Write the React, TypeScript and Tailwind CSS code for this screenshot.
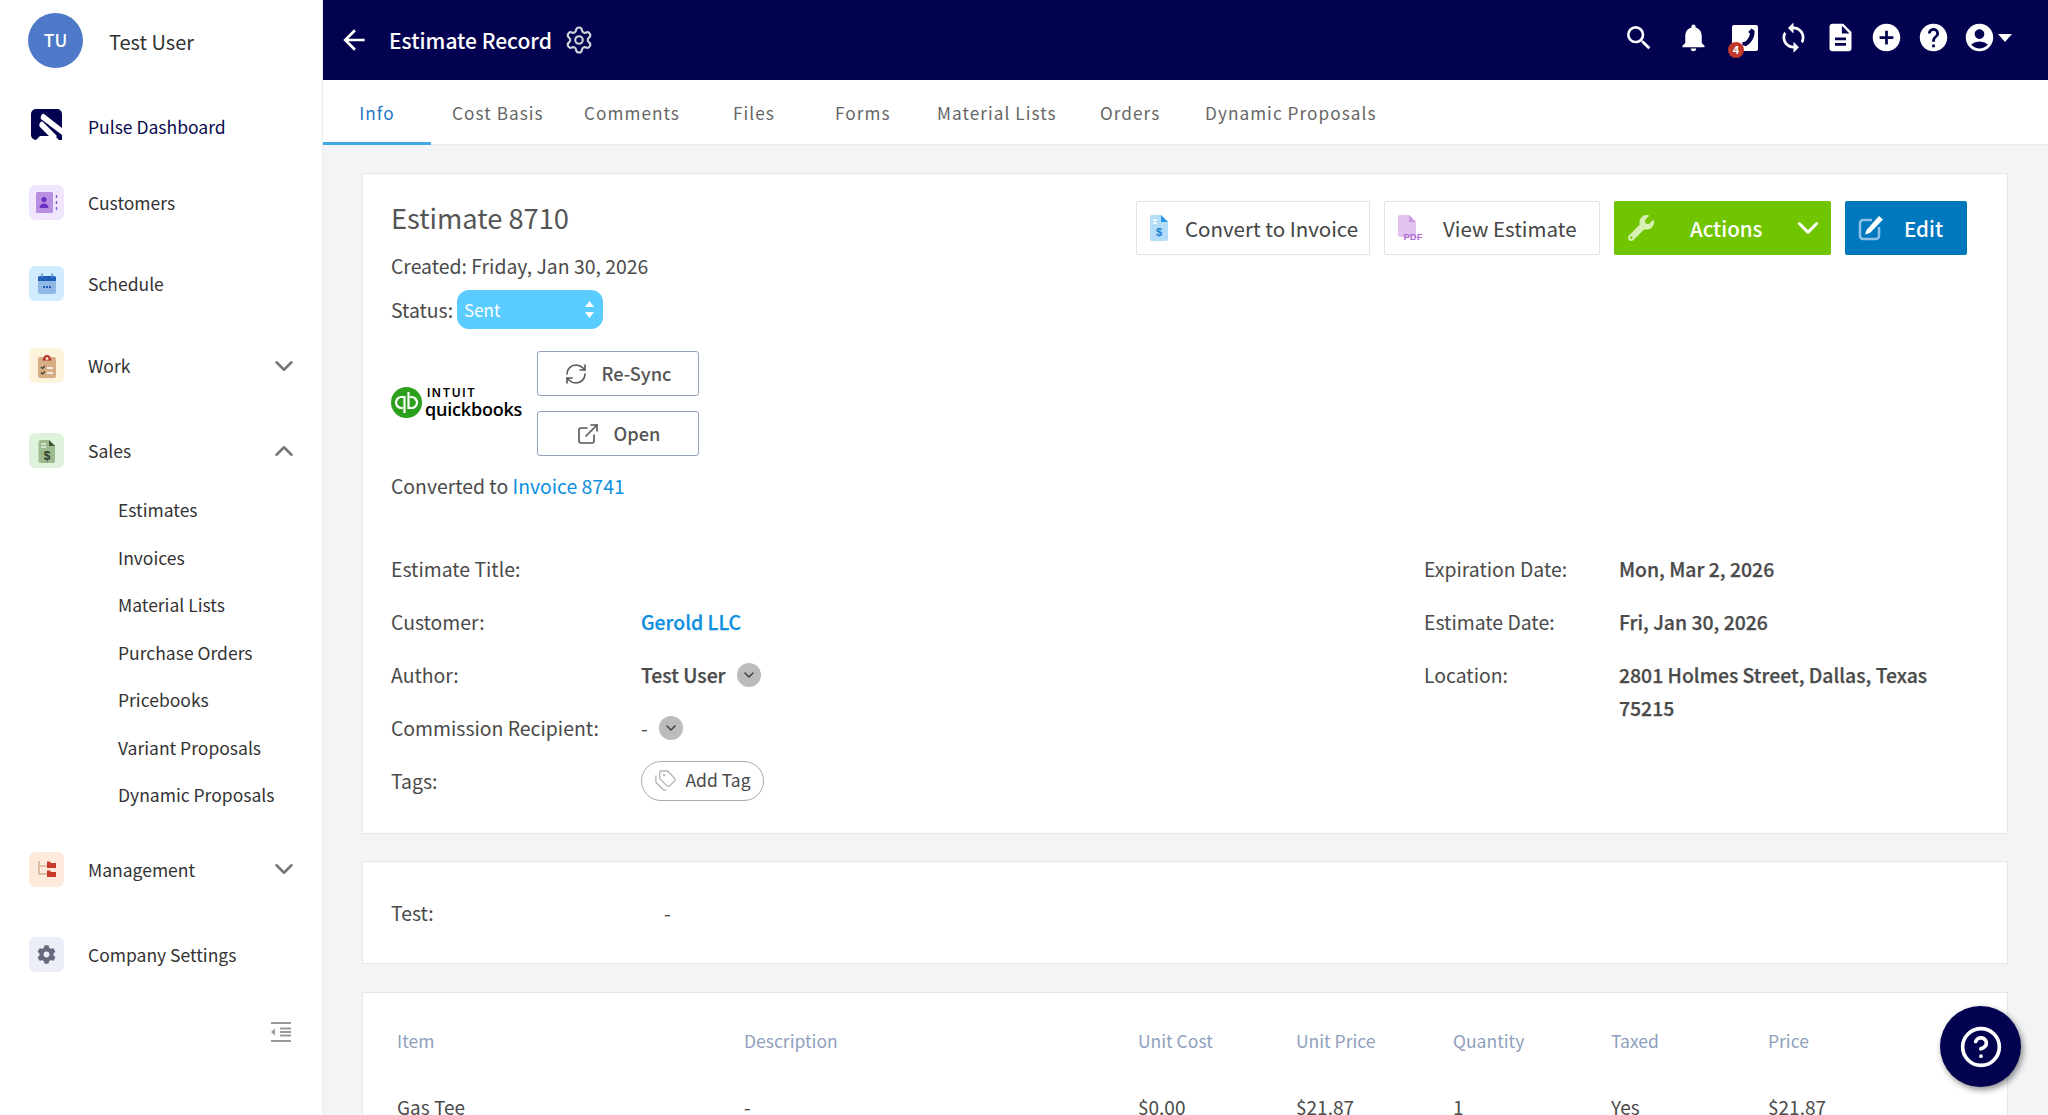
import React from "react";
import { Settings, RefreshCw, ExternalLink, Tags, ChevronDown, ChevronUp, CircleHelp } from "lucide-react";
import { MdSearch, MdNotifications, MdSync, MdDescription, MdAddCircle, MdHelp, MdAccountCircle, MdArrowBack } from "react-icons/md";
import { FaCog, FaWrench } from "react-icons/fa";

function Tile({ bg, children }: { bg: string; children: React.ReactNode }) {
  return <div className={`flex h-[35px] w-[35px] shrink-0 items-center justify-center rounded-[6px] ${bg}`}>{children}</div>;
}

const CustomersIcon = () => (
  <svg width="24" height="22" viewBox="0 0 24 22">
    <rect x="1" y="0" width="17" height="21" rx="1.5" fill="#b78ee2" />
    <circle cx="9" cy="7.5" r="2.6" fill="#6b2fc4" />
    <path d="M4.5 16c0-3 2-4.6 4.5-4.6s4.5 1.6 4.5 4.6z" fill="#6b2fc4" />
    <path d="M21.5 3v3M21.5 9v3M21.5 15v3" stroke="#8a5bd0" strokeWidth="1.4" />
  </svg>
);
const ScheduleIcon = () => (
  <svg width="20" height="22" viewBox="0 0 20 22">
    <rect x="1" y="3" width="18" height="18" rx="2" fill="#8fb8e4" />
    <path d="M1 5a2 2 0 0 1 2-2h14a2 2 0 0 1 2 2v3H1z" fill="#1f5fb8" />
    <path d="M5 0.5v4M15 0.5v4" stroke="#5d8fd0" strokeWidth="1.6" />
    <path d="M6 14h8" stroke="#1f5fb8" strokeWidth="2" strokeDasharray="2 1" />
  </svg>
);
const WorkIcon = () => (
  <svg width="20" height="24" viewBox="0 0 20 24">
    <rect x="1" y="3" width="18" height="21" rx="2" fill="#d6ad84" />
    <path d="M5.5 6.5C6 3 7.5 1 10 1s4 2 4.5 5.5z" fill="#b8352c" />
    <circle cx="10" cy="4.5" r="1.5" fill="#f5dcc0" />
    <path d="M4 13l1.5 1.500L8 12M4 18.500l1.500 1.500L8 17.500" stroke="#333" strokeWidth="1.100" fill="none" />
    <path d="M10 14h6M10 19h6" stroke="#fff" strokeWidth="1.500" />
  </svg>
);
const SalesIcon = () => (
  <svg width="18" height="24" viewBox="0 0 18 24">
    <path d="M2.500 1H11l6 6v15a2 2 0 0 1-2 2H2.500a2 2 0 0 1-2-2V3a2 2 0 0 1 2-2z" fill="#9dbb8f" />
    <path d="M11 1l6 6h-6z" fill="#3d4f38" />
    <path d="M3 5h5M3 8h5" stroke="#e4efdf" strokeWidth="1.500" />
    <text x="9" y="21" textAnchor="middle" fontSize="12" fontWeight="700" fill="#2f3a2b" fontFamily="Liberation Sans">$</text>
  </svg>
);
const ManagementIcon = () => (
  <svg width="20" height="18" viewBox="0 0 20 18">
    <path d="M2 1v13h8M2 6h8" stroke="#d8b494" strokeWidth="1.600" fill="none" />
    <path d="M10 1.500h3l1 1.500h5v5h-9z" fill="#c93a2c" />
    <path d="M10 10.500h3l1 1.500h5v5h-9z" fill="#c93a2c" />
  </svg>
);
const PulseLogo = () => (
  <svg width="31" height="31" viewBox="0 0 31 31" className="ml-[2px]">
    <path d="M5 0h21a5 5 0 0 1 5 5v26h-3L24 27H9l-4 4a5 5 0 0 1-5-5V5a5 5 0 0 1 5-5z" fill="#020250" />
    <path d="M12 13L26 27l-4 4L9 18c-2-2 1-7 3-5zM13 5l18 14v7L10 10c-1-2 1-6 3-5z" fill="#fff" />
  </svg>
);
const CollapseIcon = () => (
  <svg width="20" height="20" viewBox="0 0 20 20">
    <path d="M0 1h20M9 6.500h11M9 10h11M9 13.500h11M0 19h20" stroke="#9a9a9a" strokeWidth="1.800" />
    <path d="M4 6.500v7L0 10z" fill="#9a9a9a" />
  </svg>
);
const PhoneTile = () => (
  <div className="relative h-[26px] w-[26px]">
    <svg width="26" height="26" viewBox="0 0 26 26">
      <rect width="26" height="26" rx="2" fill="#fff" />
      <path d="M19.500 3.500l3 2.200c.6 5.500-2.500 12-8.500 15.500l-3.500-1 -.2-3 3.200-.6c2.500-2.200 4-5 4.500-8l-1.800-1.500z" fill="#020250" />
    </svg>
    <span className="absolute -bottom-[7px] -left-[4px] flex h-[16px] w-[16px] items-center justify-center rounded-full bg-[#c0392b] text-[11px] font-bold leading-none text-white">4</span>
  </div>
);
const QbLogo = () => (
  <div className="flex w-[146px] shrink-0 items-center pb-[3px]">
    <svg width="31" height="31" viewBox="0 0 31 31" className="shrink-0">
      <circle cx="15.500" cy="15.500" r="15.500" fill="#2ca01c" />
      <path d="M13.500 26V10H10.500a5.500 5.500 0 0 0 0 11H12M17.500 5v16h3a5.500 5.500 0 0 0 0-11H19" stroke="#fff" strokeWidth="2.200" fill="none" />
    </svg>
    <div className="ml-[3px] flex flex-col text-black">
      <span className="ml-[2px] font-['Inter',sans-serif] text-[12px] font-semibold leading-[13px] tracking-[1.5px]">INTUIT</span>
      <span className="font-['Open_Sans',sans-serif] text-[18px] font-semibold leading-[20px] tracking-[-0.2px]">quickbooks</span>
    </div>
  </div>
);
const ConvertIcon = () => (
  <svg width="18" height="26" viewBox="0 0 18 26">
    <path d="M2 0h9l7 7v17a2 2 0 0 1-2 2H2a2 2 0 0 1-2-2V2a2 2 0 0 1 2-2z" fill="#b3dcf8" />
    <path d="M11 0l7 7h-7z" fill="#2a9ae6" />
    <path d="M3 5h4M3 8h4" stroke="#fff" strokeWidth="1.400" />
    <text x="9" y="21" textAnchor="middle" fontSize="11" fontWeight="700" fill="#1c7fd0" fontFamily="Liberation Sans">$</text>
  </svg>
);
const PdfIcon = () => (
  <svg width="26" height="26" viewBox="0 0 26 26">
    <path d="M2 0h9l7 7v15H2a2 2 0 0 1-2-2V2a2 2 0 0 1 2-2z" fill="#e2c3ef" />
    <path d="M11 0l7 7h-7z" fill="#c79ae0" />
    <text x="15" y="25" textAnchor="middle" fontSize="9.500" fontWeight="700" fill="#b06ad4" fontFamily="Liberation Sans">PDF</text>
  </svg>
);
const EditIcon = () => (
  <svg width="26" height="26" viewBox="0 0 26 26">
    <path d="M14 5H5a3 3 0 0 0-3 3v13a3 3 0 0 0 3 3h13a3 3 0 0 0 3-3v-9" stroke="#8fc0e6" strokeWidth="2.500" fill="none" />
    <path d="M21 1l4 3.500L12 18l-5 1.500L8.500 15z" fill="#fff" />
  </svg>
);

function NavRow({ mt, icon, label, chevron, dark }: { mt: string; icon: React.ReactNode; label: string; chevron?: "up" | "down"; dark?: boolean }) {
  return (
    <div className={`flex h-[35px] items-center pl-[29px] pr-[23px] ${mt}`}>
      <div className="flex w-[59px] shrink-0">{icon}</div>
      <span className={`flex-1 text-[17.500px] leading-[35px] ${dark ? "pt-[3px] text-[#0a0a50]" : "text-[#333]"}`}>{label}</span>
      {chevron === "down" && <ChevronDown className="h-[30px] w-[30px] text-[#777]" strokeWidth={2} />}
      {chevron === "up" && <ChevronUp className="h-[30px] w-[30px] text-[#777]" strokeWidth={2} />}
    </div>
  );
}

const subItems = ["Estimates", "Invoices", "Material Lists", "Purchase Orders", "Pricebooks", "Variant Proposals", "Dynamic Proposals"];

function Sidebar() {
  return (
    <aside className="flex h-full w-[323px] shrink-0 flex-col border-r border-[#e9ebee] bg-white">
      <div className="mt-[13px] flex h-[55px] items-center pl-[28px]">
        <div className="flex h-[55px] w-[55px] items-center justify-center rounded-full bg-[#4e79c8] text-[17.500px] font-medium text-white">TU</div>
        <span className="ml-[26px] pt-[2px] text-[20px] leading-[30px] text-[#333]">Test User</span>
      </div>
      <NavRow mt="mt-[39px]" icon={<PulseLogo />} label="Pulse Dashboard" dark />
      <NavRow mt="mt-[43px]" icon={<Tile bg="bg-[#f0e6fd]"><CustomersIcon /></Tile>} label="Customers" />
      <NavRow mt="mt-[46px]" icon={<Tile bg="bg-[#d2ecff]"><ScheduleIcon /></Tile>} label="Schedule" />
      <NavRow mt="mt-[47px]" icon={<Tile bg="bg-[#fdf2da]"><WorkIcon /></Tile>} label="Work" chevron="down" />
      <NavRow mt="mt-[50px]" icon={<Tile bg="bg-[#dff3dc]"><SalesIcon /></Tile>} label="Sales" chevron="up" />
      <ul className="mt-[18px] pl-[118px]">
        {subItems.map((s) => (
          <li key={s} className="h-[47.500px] text-[17.500px] leading-[47.500px] text-[#333]">{s}</li>
        ))}
      </ul>
      <NavRow mt="mt-[33px]" icon={<Tile bg="bg-[#fdeadd]"><ManagementIcon /></Tile>} label="Management" chevron="down" />
      <NavRow mt="mt-[50px]" icon={<Tile bg="bg-[#eceef7]"><FaCog className="h-[19px] w-[19px] text-[#666a7c]" /></Tile>} label="Company Settings" />
      <div className="mt-[50px] flex justify-end pr-[31px]"><CollapseIcon /></div>
    </aside>
  );
}

function Header() {
  return (
    <header className="flex h-[80px] shrink-0 items-center bg-[#020250] pl-[15px] text-white">
      <MdArrowBack className="h-[32px] w-[32px]" />
      <h1 className="ml-[19px] text-[21px] font-medium leading-[40px]">Estimate Record</h1>
      <Settings className="ml-[12px] h-[30px] w-[30px] text-[#d4d4dc]" strokeWidth={1.700} />
      <div className="ml-auto flex items-center pb-[5px] pr-[36px]">
        <span className="flex w-[54px] justify-center"><MdSearch className="h-[32px] w-[32px]" /></span>
        <span className="flex w-[54px] justify-center"><MdNotifications className="h-[33px] w-[33px]" /></span>
        <span className="flex w-[50px] justify-center"><PhoneTile /></span>
        <span className="flex w-[46px] justify-center"><MdSync className="h-[33px] w-[33px]" /></span>
        <span className="flex w-[48px] justify-center"><MdDescription className="h-[33px] w-[33px]" /></span>
        <span className="flex w-[45px] justify-center"><MdAddCircle className="h-[33px] w-[33px]" /></span>
        <span className="flex w-[48px] justify-center"><MdHelp className="h-[33px] w-[33px]" /></span>
        <span className="flex w-[44px] justify-center"><MdAccountCircle className="h-[33px] w-[33px]" /></span>
        <svg width="14" height="8" viewBox="0 0 14 8" className="-ml-[3px]"><path d="M0 0h14L7 8z" fill="#fff" /></svg>
      </div>
    </header>
  );
}

const tabs: [string, string][] = [
  ["Cost Basis", "w-[132px]"],
  ["Comments", "w-[149px]"],
  ["Files", "w-[102px]"],
  ["Forms", "w-[102px]"],
  ["Material Lists", "w-[163px]"],
  ["Orders", "w-[105px]"],
  ["Dynamic Proposals", "w-[220px]"],
];

function Tabs() {
  return (
    <nav className="flex h-[65px] shrink-0 items-stretch border-b border-[#e9ebee] bg-white text-[17.200px] tracking-[1.050px] text-[#666]">
      <div className="mr-[21px] flex h-[65px] w-[108px] items-center justify-center border-b-[3px] border-[#3fa9e8] pt-[3px] text-[#1f75c4]">Info</div>
      {tabs.map(([t, w]) => (
        <div key={t} className={`flex items-center pt-[2px] ${w}`}>{t}</div>
      ))}
    </nav>
  );
}

const Circle = () => (
  <span className="flex h-[24px] w-[24px] items-center justify-center rounded-full bg-[#bcbcbc]">
    <ChevronDown className="h-[16px] w-[16px] text-[#444]" strokeWidth={2.400} />
  </span>
);

function Field({ label, children, labelW }: { label: string; children?: React.ReactNode; labelW: string }) {
  return (
    <div className="flex h-[53px] items-center">
      <span className={`shrink-0 ${labelW}`}>{label}</span>
      {children}
    </div>
  );
}

const strong = "font-medium [-webkit-text-stroke:0.25px_currentColor]";

function InfoCard() {
  return (
    <section className="ml-[39px] mr-[40px] mt-[28px] border border-[#e4e6ea] bg-white pb-[26px] pl-[28px] pr-[40px] pt-[25px] text-[19.400px] text-[#4a4a4a]">
      <div className="flex items-start justify-between">
        <div>
          <h2 className="text-[27.300px] font-normal leading-[36px] text-[#555]">Estimate 8710</h2>
          <p className="mt-[16px] leading-[30px]">Created: Friday, Jan 30, 2026</p>
          <div className="mt-[9px] flex h-[39px] items-center">
            <span>Status:</span>
            <div className="ml-[4px] flex h-[39px] w-[146px] items-center justify-between rounded-[12px] bg-[#5accff] pl-[7px] pr-[9px] text-[17px] text-white">
              Sent
              <svg width="9" height="17" viewBox="0 0 9 17"><path d="M4.500 0L9 6H0zM4.500 17L0 11h9z" fill="#fff" /></svg>
            </div>
          </div>
          <div className="mt-[22px] flex items-center">
            <QbLogo />
            <div className="flex flex-col gap-[15px]">
              <div className="flex h-[45px] w-[162px] items-center justify-center gap-[13px] rounded-[3px] border border-[#93a3bd] text-[18.200px] font-medium text-[#555]">
                <RefreshCw className="h-[24px] w-[24px]" strokeWidth={1.600} />Re-Sync
              </div>
              <div className="flex h-[45px] w-[162px] items-center justify-center gap-[14px] rounded-[3px] border border-[#93a3bd] text-[18.200px] font-medium text-[#555]">
                <ExternalLink className="h-[24px] w-[24px]" strokeWidth={1.600} />Open
              </div>
            </div>
          </div>
          <p className="mt-[15px] leading-[30px]">Converted to <span className="text-[#0e8fe0]">Invoice 8741</span></p>
        </div>
        <div className="mt-[2px] flex gap-[14px] whitespace-nowrap text-[20.500px]">
          <div className="flex h-[54px] w-[234px] items-center rounded-[2px] border border-[#dfe3ea] pl-[13px] text-[#444]">
            <ConvertIcon /><span className="ml-[17px]">Convert to Invoice</span>
          </div>
          <div className="flex h-[54px] w-[216px] items-center rounded-[2px] border border-[#dfe3ea] pl-[13px] text-[#444]">
            <PdfIcon /><span className="ml-[19px]">View Estimate</span>
          </div>
          <div className="flex h-[54px] w-[217px] items-center rounded-[2px] bg-[#71c500] pl-[14px] pr-[6px] font-medium text-white">
            <FaWrench className="h-[26px] w-[26px] text-[#d9f0b5]" /><span className="ml-[36px] flex-1">Actions</span><ChevronDown className="h-[34px] w-[34px]" strokeWidth={2.200} />
          </div>
          <div className="flex h-[54px] w-[122px] items-center rounded-[2px] bg-[#0078bd] pl-[13px] font-medium text-white">
            <EditIcon /><span className="ml-[20px]">Edit</span>
          </div>
        </div>
      </div>
      <div className="mt-[41px] flex">
        <div className="w-[1033px]">
          <Field label="Estimate Title:" labelW="w-[250px]" />
          <Field label="Customer:" labelW="w-[250px]"><span className={`${strong} text-[#0e8fe0]`}>Gerold LLC</span></Field>
          <Field label="Author:" labelW="w-[250px]"><span className={strong}>Test User</span><span className="ml-[11px]"><Circle /></span></Field>
          <Field label="Commission Recipient:" labelW="w-[250px]"><span>-</span><span className="ml-[11px]"><Circle /></span></Field>
          <Field label="Tags:" labelW="w-[250px]">
            <span className="flex h-[40px] w-[123px] items-center justify-center gap-[8px] rounded-[20px] border border-[#aaa] text-[17.500px]">
              <Tags className="h-[23px] w-[23px] text-[#aaa]" strokeWidth={1.200} />Add Tag
            </span>
          </Field>
        </div>
        <div className="flex-1">
          <Field label="Expiration Date:" labelW="w-[195px]"><span className={strong}>Mon, Mar 2, 2026</span></Field>
          <Field label="Estimate Date:" labelW="w-[195px]"><span className={strong}>Fri, Jan 30, 2026</span></Field>
          <div className="flex pt-[10px]">
            <span className="w-[195px] shrink-0 leading-[33px]">Location:</span>
            <span className={`w-[320px] leading-[33px] ${strong}`}>2801 Holmes Street, Dallas, Texas 75215</span>
          </div>
        </div>
      </div>
    </section>
  );
}

const cols = ["Item", "Description", "Unit Cost", "Unit Price", "Quantity", "Taxed", "Price"];
const row = ["Gas Tee", "-", "$0.00", "$21.87", "1", "Yes", "$21.87"];
const gridCols = "grid grid-cols-[347px_394px_158px_157px_158px_157px_1fr]";

function App() {
  return (
    <div className="flex h-[1115px] w-[2048px] overflow-hidden bg-white font-['Noto_Sans_CJK_SC',sans-serif]">
      <Sidebar />
      <main className="relative flex min-w-0 flex-1 flex-col overflow-hidden bg-[#f3f4f6]">
        <Header />
        <Tabs />
        <InfoCard />
        <section className="ml-[39px] mr-[40px] mt-[27px] flex h-[103px] shrink-0 items-center border border-[#e4e6ea] bg-white pl-[28px] text-[19.400px] text-[#4a4a4a]">
          <span className="w-[273px]">Test:</span><span>-</span>
        </section>
        <section className="ml-[39px] mr-[40px] mt-[28px] flex-1 border border-[#e4e6ea] bg-white pl-[34px] pt-[33px]">
          <div className={`${gridCols} h-[30px] items-center text-[17.500px] text-[#8f9fbd]`}>
            {cols.map((c) => <span key={c}>{c}</span>)}
          </div>
          <div className={`${gridCols} mt-[36px] h-[30px] items-center text-[19px] text-[#4a4a4a]`}>
            {row.map((c, i) => <span key={i}>{c}</span>)}
          </div>
        </section>
        <div className="absolute bottom-[28px] right-[27px] flex h-[81px] w-[81px] items-center justify-center rounded-full bg-[#020250] shadow-[2px_3px_6px_rgba(0,0,0,0.45)]">
          <CircleHelp className="h-[44px] w-[44px] text-white" strokeWidth={2} />
        </div>
      </main>
    </div>
  );
}

export default App;
